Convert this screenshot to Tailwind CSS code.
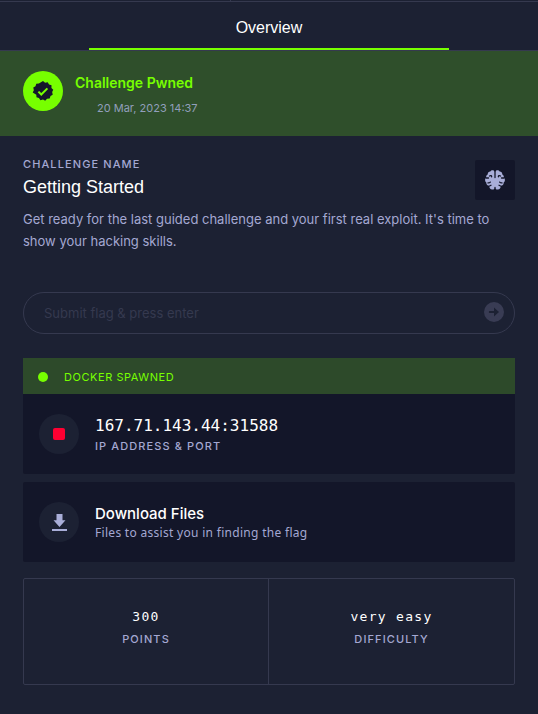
<!DOCTYPE html>
<html lang="en">
<head>
<meta charset="utf-8">
<meta name="viewport" content="width=device-width, initial-scale=1">
<title>Getting Started</title>
<script src="https://cdn.jsdelivr.net/npm/@tailwindcss/browser@4"></script>
</head>
<body class="min-h-screen bg-[#1c2133] font-['Liberation_Sans',sans-serif] text-[#a4b1cd]">
<div class="grid h-0.5 grid-cols-[43%_1fr] border-b border-[#35394f]">
  <div class="border-r border-[#35394f]"></div>
</div>
<nav class="flex justify-center border-b border-[#35394f]">
  <a href="#overview" class="h-12 w-[67%] border-b-2 border-[#77ff00] pt-3.5 text-center text-base leading-6 text-white">Overview</a>
</nav>
<section class="flex items-start gap-3 bg-[#2f4f2b] px-[23px] pt-5 pb-[19px]">
  <div class="flex size-10 items-center justify-center rounded-full bg-[#77ff00]">
    <svg class="size-[22px]" viewBox="0 0 24 24" aria-hidden="true"><path fill="#15172b" d="M12 1.200l2.300 1.700 2.800-.5 1.500 2.400 2.700.9-.1 2.900 2 2-1.200 2.600.6 2.800-2.400 1.500-.9 2.700-2.900.3-2 2-2.400-1.200-2.800.8-1.600-2.400-2.700-.9-.2-2.800L.800 13.700 2 11.100l-.6-2.800L3.800 6.700l.9-2.700 2.800-.2z"/><path d="M7 12.700l3.100 3.100 6.700-6.700" fill="none" stroke="#77ff00" stroke-width="2.200"/></svg>
  </div>
  <div>
    <h2 class="font-[Inter] text-sm leading-6 font-semibold text-[#77ff00]">Challenge Pwned</h2>
    <p class="pt-1 pl-[22px] font-[Inter] text-[11px] leading-[18px] text-[#929fbc]">20 Mar, 2023 14:37</p>
  </div>
</section>
<main class="px-[23px] pt-5 pb-7">
  <header class="flex items-start justify-between pt-1">
    <div>
      <p class="font-[Inter] text-[11px] leading-2 font-medium tracking-widest text-[#a4a8d2] uppercase">Challenge name</p>
      <h1 class="pt-[7px] pb-px text-lg leading-6 text-white">Getting Started</h1>
    </div>
    <div class="flex size-10 items-center justify-center rounded-xs bg-[#131629]">
      <svg class="size-5" viewBox="0 0 20 20" aria-hidden="true">
        <path fill="#a9aed8" d="M9.500 1.500C8.800-.3 6 0 5.400 1.600 3.700 1.500 2.500 3 2.800 4.500 1.400 5 .9 6.300 1.300 7.500-.3 8.600-.3 11.400 1.300 12.500 1.200 14.300 2.500 15.800 4.200 15.800 4.200 18 5.500 19.700 7.300 19.600 8.700 19.600 9.500 19 10 18 10.500 19 11.300 19.600 12.700 19.600 14.500 19.700 15.800 18 15.800 15.800 17.500 15.800 18.800 14.300 18.700 12.500 20.300 11.400 20.300 8.600 18.700 7.500 19.100 6.300 18.600 5 17.200 4.500 17.500 3 16.300 1.500 14.600 1.600 14 0 11.200-.3 10.500 1.500z"/>
        <g fill="none" stroke="#131629" stroke-width="1.300" stroke-linecap="round">
          <path d="M10 0v7.500M10 17.500v2.500M1 8h2.500M19 8h-2.500M4.500 6c1.200-.8 2.200-.3 2.100.8M15.500 6c-1.200-.8-2.200-.3-2.100.8M3 12.900c1.100.1 1.800-.1 2.300-.8M17 12.900c-1.100.1-1.800-.1-2.300-.8M4.500 16l1.500-.8M15.500 16l-1.500-.8"/>
        </g>
      </svg>
    </div>
  </header>
  <p class="pt-2 font-[Inter] text-[13px] leading-[22px] text-[#a4a8d2]">Get ready for the last guided challenge and your first real exploit. It's time to show your hacking skills.</p>
  <form class="mt-10 flex h-[42px] items-center rounded-full border border-[#35394f] pr-2.5 pl-5">
    <input type="text" aria-label="Flag" placeholder="Submit flag &amp; press enter" class="min-w-0 flex-1 bg-transparent font-[Inter] text-[13px] leading-5 text-white outline-none placeholder:text-[#35394f]">
    <button type="button" aria-label="Submit flag" class="pb-0.5">
      <svg class="size-5" viewBox="0 0 20 20" aria-hidden="true"><circle cx="10" cy="10" r="10" fill="#393c54"/><path fill="#1c2133" d="M5.800 9H10V5.500L15 10l-5 4.500V11H5.800a1 1 0 010-2z"/></svg>
    </button>
  </form>
  <section class="mt-6">
    <div class="flex h-9 items-center gap-4 bg-[#2d4a2a] px-[15px] font-[Inter] text-[11px] tracking-wider text-[#77ff00] uppercase">
      <span class="mt-0.5 size-2.5 rounded-full bg-[#77ff00]"></span>
      <span class="pt-0.5">Docker spawned</span>
    </div>
    <div class="flex items-center gap-4 rounded-b-xs bg-[#131629] px-4 py-5">
      <button type="button" aria-label="Stop docker" class="flex size-10 items-center justify-center rounded-full bg-[#1c2133]"><span class="size-3 rounded-xs bg-[#ff0032]"></span></button>
      <div>
        <p class="pt-0.5 font-['DejaVu_Sans_Mono',monospace] text-base leading-5 text-white">167.71.143.44:31588</p>
        <p class="pt-0.5 font-[Inter] text-[11px] leading-4 font-medium tracking-widest text-[#a4a8d2] uppercase">IP address &amp; port</p>
      </div>
    </div>
  </section>
  <section class="mt-2 flex items-center gap-4 rounded-xs bg-[#131629] px-4 py-5">
    <button type="button" aria-label="Download files" class="flex size-10 items-center justify-center rounded-full bg-[#1c2133]">
      <svg class="size-5" viewBox="0 0 20 20" aria-hidden="true"><path fill="#a9aed8" d="M7.500 2h6v6.300h3L10.500 15l-6-6.700h3zM3 17h15v2H3z"/></svg>
    </button>
    <div>
      <h2 class="pt-0.5 font-[Inter] text-[15px] leading-5 font-medium text-white">Download Files</h2>
      <p class="font-['Noto_Sans',sans-serif] text-xs leading-[18px] tracking-wide text-[#a4a8d2]">Files to assist you in finding the flag</p>
    </div>
  </section>
  <dl class="mt-4 grid grid-cols-2 divide-x divide-[#35394f] rounded-xs border border-[#35394f] text-center">
    <div class="flex flex-col-reverse pt-7 pb-[37px]">
      <dt class="pt-1 font-[Inter] text-[11px] leading-4 font-medium tracking-widest text-[#a4a8d2] uppercase">Points</dt>
      <dd class="font-['DejaVu_Sans_Mono',monospace] text-[13px] leading-5 tracking-widest text-white">300</dd>
    </div>
    <div class="flex flex-col-reverse pt-7 pb-[37px]">
      <dt class="pt-1 font-[Inter] text-[11px] leading-4 font-medium tracking-widest text-[#a4a8d2] uppercase">Difficulty</dt>
      <dd class="font-['DejaVu_Sans_Mono',monospace] text-[13px] leading-5 tracking-widest text-white">very easy</dd>
    </div>
  </dl>
</main>
</body>
</html>
